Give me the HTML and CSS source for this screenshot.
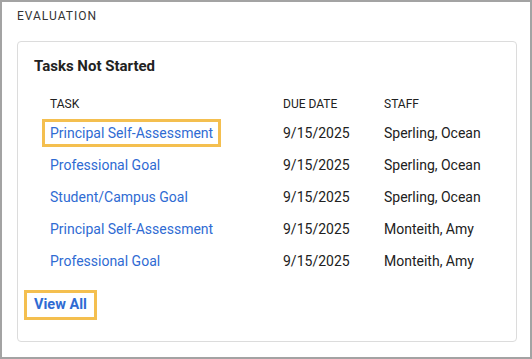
FILE: index.html
```html
<!DOCTYPE html>
<html lang="en">
<head>
    <meta charset="UTF-8">
    <meta name="viewport" content="width=device-width, initial-scale=1.0">
    <title>Evaluation</title>
    <link rel="stylesheet" href="styles.css">
</head>
<body>
    <div class="frame">
        <div class="section-label">EVALUATION</div>
        <div class="card">
            <h2 class="card-title">Tasks Not Started</h2>
            <div class="task-table">
                <div class="task-row task-head">
                    <div class="cell">Task</div>
                    <div class="cell">Due Date</div>
                    <div class="cell">Staff</div>
                </div>
                <div class="task-row">
                    <div class="cell"><a href="#" class="task-link highlight">Principal Self-Assessment</a></div>
                    <div class="cell">9/15/2025</div>
                    <div class="cell">Sperling, Ocean</div>
                </div>
                <div class="task-row">
                    <div class="cell"><a href="#" class="task-link">Professional Goal</a></div>
                    <div class="cell">9/15/2025</div>
                    <div class="cell">Sperling, Ocean</div>
                </div>
                <div class="task-row">
                    <div class="cell"><a href="#" class="task-link">Student/Campus Goal</a></div>
                    <div class="cell">9/15/2025</div>
                    <div class="cell">Sperling, Ocean</div>
                </div>
                <div class="task-row">
                    <div class="cell"><a href="#" class="task-link">Principal Self-Assessment</a></div>
                    <div class="cell">9/15/2025</div>
                    <div class="cell">Monteith, Amy</div>
                </div>
                <div class="task-row">
                    <div class="cell"><a href="#" class="task-link">Professional Goal</a></div>
                    <div class="cell">9/15/2025</div>
                    <div class="cell">Monteith, Amy</div>
                </div>
            </div>
            <a href="#" class="view-all highlight">View All</a>
        </div>
    </div>
</body>
</html>
```

FILE: styles.css
```css
* {
    box-sizing: border-box;
}

body {
    font-family: Roboto, "Liberation Sans", Arial, sans-serif;
    background-color: #fff;
    color: #212121;
    margin: 0;
    padding: 0;
}

.frame {
    height: 359px;
    border: 2px solid #a3a3a3;
    padding: 6px 13px 0 15px;
}

.section-label {
    font-size: 12px;
    line-height: 16px;
    letter-spacing: 1px;
    color: #333;
}

.card {
    margin-top: 17px;
    border: 1px solid #dcdcdc;
    border-radius: 4px;
    padding: 14px 16px 21px 6px;
}

.card-title {
    margin: 0 0 15px 10px;
    font-size: 15px;
    line-height: 20px;
    font-weight: bold;
    color: #222;
}

.task-table {
    margin-left: 18px;
    margin-bottom: 13px;
}

.task-row {
    display: grid;
    grid-template-columns: 233px 101px 1fr;
    align-items: center;
    height: 32px;
    font-size: 14px;
}

.task-head {
    height: 26px;
    font-size: 12px;
    text-transform: uppercase;
}

.cell {
    padding-left: 8px;
}

.task-row .cell:first-child {
    padding-left: 0;
}

.task-head .cell:first-child {
    padding-left: 8px;
}

.task-link {
    display: inline-block;
    line-height: 22px;
    padding: 0 5px;
    border: 3px solid transparent;
    color: #2f6bd3;
    text-decoration: none;
}

.view-all {
    display: inline-block;
    font-size: 14.5px;
    font-weight: bold;
    line-height: 24px;
    padding: 0 7px;
    border: 3px solid transparent;
    color: #2f6bd3;
    text-decoration: none;
}

.highlight {
    border-color: #f4bf4f;
}
```
